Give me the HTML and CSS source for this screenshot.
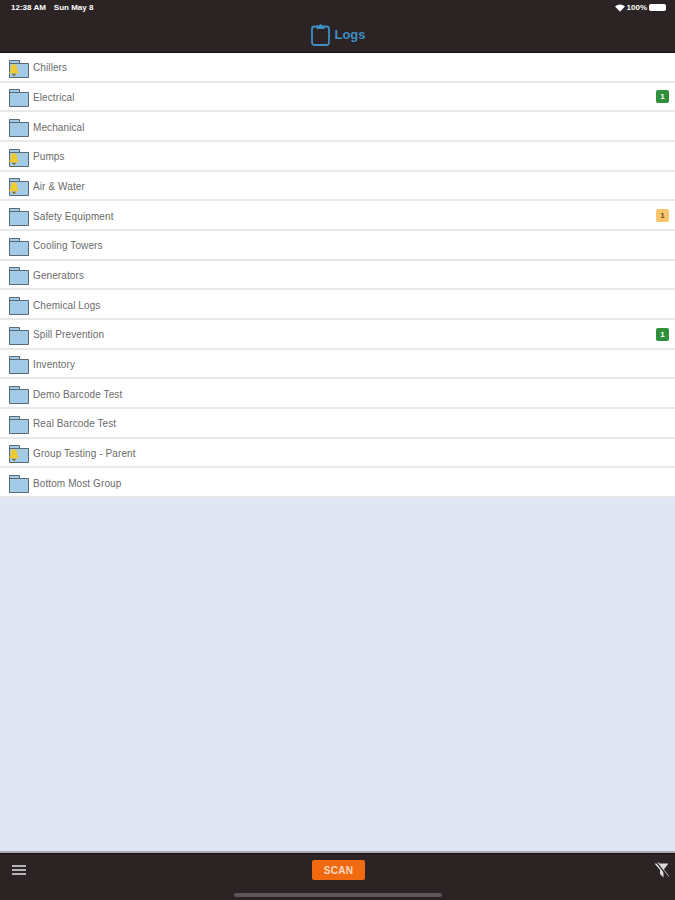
FILE: index.html
```html
<!DOCTYPE html>
<html lang="en">
<head>
    <meta charset="UTF-8">
    <meta name="viewport" content="width=device-width, initial-scale=1.0">
    <title>Logs</title>
    <link rel="stylesheet" href="styles.css">
</head>
<body>
    <svg class="sprites" width="0" height="0">
        <symbol id="folder" viewBox="0 0 20 18">
            <path d="M0.5 17.5V0.5H10.5V3.5H19.5V17.5Z" fill="#a3cbe8" stroke="#4a5a68" stroke-width="0.9"/>
            <path d="M0.5 3.5H10.5" stroke="#4a5a68" stroke-width="0.9" fill="none"/>
        </symbol>
        <symbol id="bell" viewBox="0 0 10 10">
            <path d="M5 0.3C3 0.3 2.3 2 2.3 4C2.3 6 1.4 7 0.2 7.8H9.8C8.6 7 7.7 6 7.7 4C7.7 2 7 0.3 5 0.3Z" fill="#f0cb30"/>
            <path d="M3.4 8.2H6.6C6.4 9.4 5.7 9.9 5 9.9C4.3 9.9 3.6 9.4 3.4 8.2Z" fill="#8a7420"/>
        </symbol>
    </svg>

    <div class="page">
        <header class="topbar">
            <div class="status">
                <div class="status-left">
                    <span>12:38 AM</span>
                    <span>Sun May 8</span>
                </div>
                <div class="status-right">
                    <svg class="wifi" viewBox="0 0 12 9" width="10" height="8">
                        <path d="M6 9L0 2.6C3.4-0.6 8.6-0.6 12 2.6Z" fill="#fff"/>
                    </svg>
                    <span>100%</span>
                    <span class="battery"></span>
                </div>
            </div>
            <div class="title">
                <svg class="clipboard" viewBox="0 0 19 23" width="19" height="23">
                    <rect x="1" y="3.5" width="17" height="18.5" rx="2.5" fill="none" stroke="#3d8fc4" stroke-width="1.8"/>
                    <path d="M5.5 6V2.8H7.8L9.5 0.6L11.2 2.8H13.5V6Z" fill="#3d8fc4"/>
                </svg>
                <span>Logs</span>
            </div>
        </header>

        <ul class="log-list">
            <li class="log-row">
                <span class="folder"><svg class="folder-img"><use href="#folder"/></svg><svg class="bell"><use href="#bell"/></svg></span>
                <span class="log-name">Chillers</span>
            </li>
            <li class="log-row">
                <span class="folder"><svg class="folder-img"><use href="#folder"/></svg></span>
                <span class="log-name">Electrical</span>
                <span class="badge badge-green">1</span>
            </li>
            <li class="log-row">
                <span class="folder"><svg class="folder-img"><use href="#folder"/></svg></span>
                <span class="log-name">Mechanical</span>
            </li>
            <li class="log-row">
                <span class="folder"><svg class="folder-img"><use href="#folder"/></svg><svg class="bell"><use href="#bell"/></svg></span>
                <span class="log-name">Pumps</span>
            </li>
            <li class="log-row">
                <span class="folder"><svg class="folder-img"><use href="#folder"/></svg><svg class="bell"><use href="#bell"/></svg></span>
                <span class="log-name">Air &amp; Water</span>
            </li>
            <li class="log-row">
                <span class="folder"><svg class="folder-img"><use href="#folder"/></svg></span>
                <span class="log-name">Safety Equipment</span>
                <span class="badge badge-orange">1</span>
            </li>
            <li class="log-row">
                <span class="folder"><svg class="folder-img"><use href="#folder"/></svg></span>
                <span class="log-name">Cooling Towers</span>
            </li>
            <li class="log-row">
                <span class="folder"><svg class="folder-img"><use href="#folder"/></svg></span>
                <span class="log-name">Generators</span>
            </li>
            <li class="log-row">
                <span class="folder"><svg class="folder-img"><use href="#folder"/></svg></span>
                <span class="log-name">Chemical Logs</span>
            </li>
            <li class="log-row">
                <span class="folder"><svg class="folder-img"><use href="#folder"/></svg></span>
                <span class="log-name">Spill Prevention</span>
                <span class="badge badge-green">1</span>
            </li>
            <li class="log-row">
                <span class="folder"><svg class="folder-img"><use href="#folder"/></svg></span>
                <span class="log-name">Inventory</span>
            </li>
            <li class="log-row">
                <span class="folder"><svg class="folder-img"><use href="#folder"/></svg></span>
                <span class="log-name">Demo Barcode Test</span>
            </li>
            <li class="log-row">
                <span class="folder"><svg class="folder-img"><use href="#folder"/></svg></span>
                <span class="log-name">Real Barcode Test</span>
            </li>
            <li class="log-row">
                <span class="folder"><svg class="folder-img"><use href="#folder"/></svg><svg class="bell"><use href="#bell"/></svg></span>
                <span class="log-name">Group Testing - Parent</span>
            </li>
            <li class="log-row">
                <span class="folder"><svg class="folder-img"><use href="#folder"/></svg></span>
                <span class="log-name">Bottom Most Group</span>
            </li>
        </ul>

        <footer class="bottombar">
            <div class="toolbar">
                <svg class="menu" viewBox="0 0 14 10" width="14" height="10">
                    <path d="M0 1H14M0 5H14M0 9H14" stroke="#e4e4e4" stroke-width="1.7"/>
                </svg>
                <button class="scan">SCAN</button>
                <svg class="filter" viewBox="0 0 15 16" width="15" height="16">
                    <path d="M0.5 1.5H14.5L9.5 8V15.5L6 12V8Z" fill="#d8d8d8"/>
                    <path d="M2.5 0L14 15" stroke="#2b2324" stroke-width="1.3"/>
                    <path d="M3.8 0L15 14.6" stroke="#d8d8d8" stroke-width="0.8"/>
                </svg>
            </div>
            <div class="home-indicator"></div>
        </footer>
    </div>
</body>
</html>
```

FILE: styles.css
```css
* {
    box-sizing: border-box;
}
body {
    margin: 0;
    font-family: "Liberation Sans", Arial, sans-serif;
    background-color: #e0e7f2;
}
.sprites {
    display: block;
    height: 0;
}
.page {
    display: flex;
    flex-direction: column;
    height: 900px;
}
.topbar {
    height: 53px;
    background-color: #2b2324;
    border-bottom: 1px solid #1c1214;
    color: white;
}
.status {
    display: flex;
    justify-content: space-between;
    align-items: center;
    height: 15px;
    padding: 0 9px 0 11px;
    font-size: 8px;
    font-weight: bold;
}
.status-left {
    display: flex;
    gap: 8px;
}
.status-right {
    display: flex;
    align-items: center;
    gap: 2px;
}
.battery {
    width: 17px;
    height: 7px;
    background-color: white;
    border-radius: 2px;
}
.title {
    display: flex;
    justify-content: center;
    align-items: center;
    gap: 4px;
    height: 37px;
    padding: 2px 0 0 2px;
    color: #3d8fc4;
    font-size: 13px;
    font-weight: bold;
}
.log-list {
    list-style: none;
    margin: 0;
    padding: 0;
}
.log-row {
    display: flex;
    align-items: center;
    height: 29.67px;
    padding: 2px 6px 0 9px;
    background-color: white;
    border-bottom: 2px solid #e8e8e8;
}
.folder {
    position: relative;
    width: 20px;
    height: 18px;
    margin-right: 4px;
    margin-top: 2px;
}
.folder-img {
    display: block;
    width: 20px;
    height: 18px;
}
.bell {
    position: absolute;
    left: -1px;
    top: 4px;
    width: 12px;
    height: 12px;
}
.log-name {
    flex: 1;
    color: #6b6b6b;
    font-size: 10px;
    letter-spacing: 0.1px;
}
.badge {
    width: 13px;
    height: 13px;
    margin-top: -1px;
    border-radius: 2px;
    font-size: 8px;
    font-weight: bold;
    line-height: 13px;
    text-align: center;
}
.badge-green {
    background-color: #2f8f3a;
    color: white;
}
.badge-orange {
    background-color: #fbc56e;
    color: #6b5020;
}
.bottombar {
    margin-top: auto;
    height: 47px;
    background-color: #2b2324;
    border-top: 1px solid #1c1214;
    box-shadow: 0 -2px 0 #a9aeb8;
}
.toolbar {
    display: flex;
    justify-content: space-between;
    align-items: center;
    height: 33px;
    padding: 0 6px 1px 12px;
}
.scan {
    width: 53px;
    height: 20px;
    margin-right: 3px;
    padding: 0;
    background-color: #f26a0f;
    color: #fbd9c2;
    font-family: inherit;
    font-size: 10px;
    font-weight: bold;
    letter-spacing: 0.3px;
    border: none;
    border-radius: 2px;
}
.home-indicator {
    width: 208px;
    height: 4px;
    margin: 6px auto 0;
    background-color: #5c5859;
    border-radius: 2px;
}
```
